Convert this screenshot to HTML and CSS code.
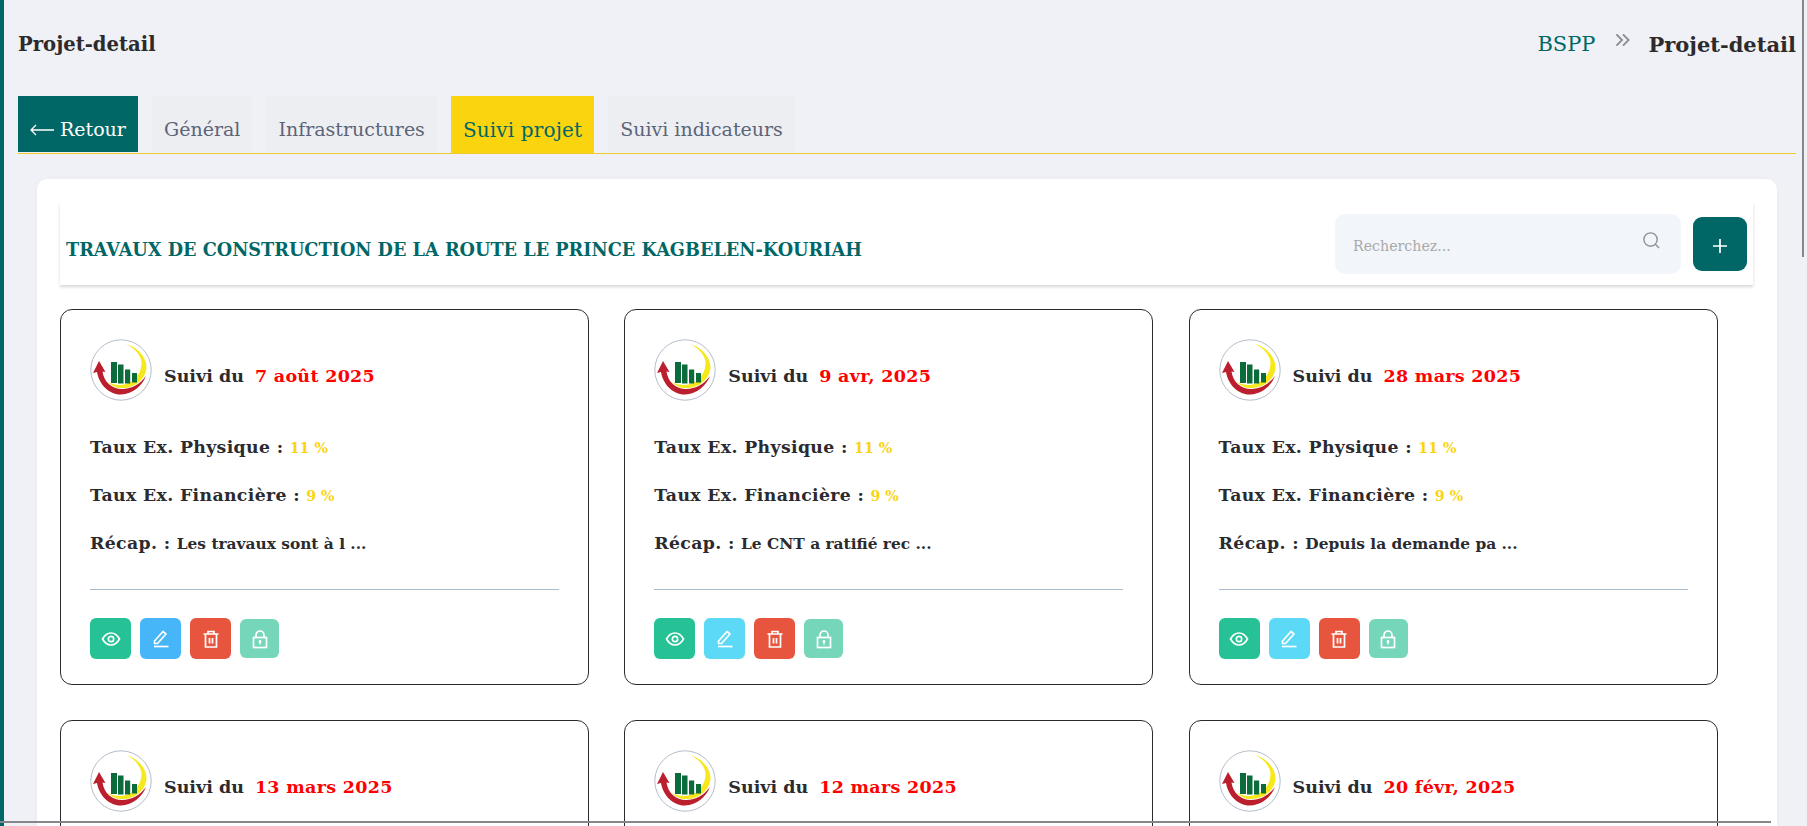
FILE: index.html
```html
<!DOCTYPE html>
<html lang="fr">
<head>
<meta charset="utf-8">
<title>Projet-detail</title>
<link rel="stylesheet" href="styles.css">
</head>
<body>
<svg class="defs" width="0" height="0" aria-hidden="true">
  <symbol id="logo" viewBox="0 0 62 62">
    <circle cx="31" cy="31" r="30.200" fill="#fff" stroke="#b4bdcb" stroke-width="1"/>
    <path d="M36 5 C48 8 57 19 56.500 29 C55.500 41 43 50 31 49 C26 49 22 47 18 43 C24 46 30 47 36 45 C46 42 51.500 33 51.500 24 C51.500 17 45 9 36 5Z" fill="#f7e81c"/>
    <rect x="21" y="23" width="6" height="21" fill="#0b6b3a"/>
    <rect x="28" y="25.500" width="5.500" height="19" fill="#0b6b3a"/>
    <rect x="35" y="30.500" width="5.200" height="14" fill="#0b6b3a"/>
    <rect x="42" y="34" width="5" height="9.500" fill="#0b6b3a"/>
    <path d="M9 22 L3 34 L7 33 C9 46 20 56 31 55.500 C43 55 52 47 56 37 C50 45 42 50 32 50 C22 50 14 43 12.500 32.500 L15.500 33Z" fill="#bb1e2d"/>
  </symbol>
  <symbol id="eye" viewBox="0 0 20 20">
    <path d="M1.500 10 C4 5.500 7 4 10 4 C13 4 16 5.500 18.500 10 C16 14.500 13 16 10 16 C7 16 4 14.500 1.500 10Z" fill="none" stroke="#fff" stroke-width="1.700"/>
    <circle cx="10" cy="10" r="2.700" fill="none" stroke="#fff" stroke-width="1.700"/>
  </symbol>
  <symbol id="pen" viewBox="0 0 20 20">
    <path d="M3.500 12 L12 2.500 L15 5 L6.500 14.500 L3.500 14.500Z" fill="none" stroke="#fff" stroke-width="1.700" stroke-linejoin="round"/>
    <path d="M3 17.500 H17.500" stroke="#fff" stroke-width="1.700"/>
  </symbol>
  <symbol id="trash" viewBox="0 0 20 20">
    <path d="M2.500 5 H17.500 M7 5 V2.500 H13 V5 M4.500 5 V18 H15.500 V5" fill="none" stroke="#fff" stroke-width="1.700"/>
    <path d="M8.500 9 V14.500 M11.500 9 V14.500" stroke="#fff" stroke-width="1.700"/>
  </symbol>
  <symbol id="lock" viewBox="0 0 20 20">
    <path d="M6 8.500 V6 C6 3.500 8 2 10 2 C12 2 14 3.500 14 6 V8.500" fill="none" stroke="#fff" stroke-width="1.700"/>
    <rect x="3.500" y="8.500" width="13" height="10" fill="none" stroke="#fff" stroke-width="1.700"/>
    <circle cx="10" cy="12.500" r="1.400" fill="#fff"/>
    <path d="M10 13 V15.500" stroke="#fff" stroke-width="1.400"/>
  </symbol>
  <symbol id="search" viewBox="0 0 20 20">
    <circle cx="9" cy="9" r="7" fill="none" stroke="#8f9399" stroke-width="1.500"/>
    <path d="M14 14 L18 18" stroke="#8f9399" stroke-width="1.500"/>
  </symbol>
  <symbol id="plus" viewBox="0 0 14 14">
    <path d="M7 0 V14 M0 7 H14" stroke="#fff" stroke-width="1.700"/>
  </symbol>
  <symbol id="chev" viewBox="0 0 16 14">
    <path d="M1.500 1 L7.500 7 L1.500 13 M8.500 1 L14.500 7 L8.500 13" fill="none" stroke="#8e8c92" stroke-width="2"/>
  </symbol>
  <symbol id="back" viewBox="0 0 24 12">
    <path d="M24 6 H1 M6 1 L1 6 L6 11" fill="none" stroke="#fff" stroke-width="1.300"/>
  </symbol>
</svg>

<div class="app">
  <header class="page-head">
    <h1 class="page-title">Projet-detail</h1>
    <nav class="crumbs">
      <a class="crumb-link">BSPP</a>
      <svg class="crumb-sep"><use href="#chev"/></svg>
      <strong class="crumb-current">Projet-detail</strong>
    </nav>
  </header>

  <div class="tabs">
    <a class="tab tab-back"><svg class="back-arrow"><use href="#back"/></svg>Retour</a>
    <a class="tab">Général</a>
    <a class="tab">Infrastructures</a>
    <a class="tab tab-active">Suivi projet</a>
    <a class="tab">Suivi indicateurs</a>
  </div>

  <main class="panel">
    <div class="panel-head">
      <h2 class="project-name">TRAVAUX DE CONSTRUCTION DE LA ROUTE LE PRINCE KAGBELEN-KOURIAH</h2>
      <div class="search">
        <span class="search-text">Recherchez...</span>
        <svg class="search-icon"><use href="#search"/></svg>
      </div>
      <button class="add-btn" type="button"><svg class="plus"><use href="#plus"/></svg></button>
    </div>

    <div class="cards">
      <article class="card">
        <div class="card-head"><svg class="logo"><use href="#logo"/></svg><span class="card-title">Suivi du</span><span class="card-date">7 août 2025</span></div>
        <p class="row">Taux Ex. Physique : <span class="val">11 %</span></p>
        <p class="row">Taux Ex. Financière : <span class="val">9 %</span></p>
        <p class="row">Récap. : <span class="recap">Les travaux sont à l ...</span></p>
        <div class="actions">
          <button class="act act-view" type="button"><svg class="ico"><use href="#eye"/></svg></button>
          <button class="act act-edit-strong" type="button"><svg class="ico"><use href="#pen"/></svg></button>
          <button class="act act-del" type="button"><svg class="ico"><use href="#trash"/></svg></button>
          <button class="act act-lock" type="button"><svg class="ico"><use href="#lock"/></svg></button>
        </div>
      </article>
      <article class="card">
        <div class="card-head"><svg class="logo"><use href="#logo"/></svg><span class="card-title">Suivi du</span><span class="card-date">9 avr, 2025</span></div>
        <p class="row">Taux Ex. Physique : <span class="val">11 %</span></p>
        <p class="row">Taux Ex. Financière : <span class="val">9 %</span></p>
        <p class="row">Récap. : <span class="recap">Le CNT a ratifié rec ...</span></p>
        <div class="actions">
          <button class="act act-view" type="button"><svg class="ico"><use href="#eye"/></svg></button>
          <button class="act act-edit" type="button"><svg class="ico"><use href="#pen"/></svg></button>
          <button class="act act-del" type="button"><svg class="ico"><use href="#trash"/></svg></button>
          <button class="act act-lock" type="button"><svg class="ico"><use href="#lock"/></svg></button>
        </div>
      </article>
      <article class="card">
        <div class="card-head"><svg class="logo"><use href="#logo"/></svg><span class="card-title">Suivi du</span><span class="card-date">28 mars 2025</span></div>
        <p class="row">Taux Ex. Physique : <span class="val">11 %</span></p>
        <p class="row">Taux Ex. Financière : <span class="val">9 %</span></p>
        <p class="row">Récap. : <span class="recap">Depuis la demande pa ...</span></p>
        <div class="actions">
          <button class="act act-view" type="button"><svg class="ico"><use href="#eye"/></svg></button>
          <button class="act act-edit" type="button"><svg class="ico"><use href="#pen"/></svg></button>
          <button class="act act-del" type="button"><svg class="ico"><use href="#trash"/></svg></button>
          <button class="act act-lock" type="button"><svg class="ico"><use href="#lock"/></svg></button>
        </div>
      </article>
      <article class="card">
        <div class="card-head"><svg class="logo"><use href="#logo"/></svg><span class="card-title">Suivi du</span><span class="card-date">13 mars 2025</span></div>
      </article>
      <article class="card">
        <div class="card-head"><svg class="logo"><use href="#logo"/></svg><span class="card-title">Suivi du</span><span class="card-date">12 mars 2025</span></div>
      </article>
      <article class="card">
        <div class="card-head"><svg class="logo"><use href="#logo"/></svg><span class="card-title">Suivi du</span><span class="card-date">20 févr, 2025</span></div>
      </article>
    </div>
  </main>
</div>

<div class="scroll-v"></div>
<div class="scroll-h"></div>
</body>
</html>
```
FILE: styles.css
```css
* { box-sizing: border-box; }
html, body { margin: 0; height: 826px; overflow: hidden; background: #eff1f6; }
body { font-family: "DejaVu Serif", serif; color: #2b2b2f; position: relative; }
.defs { position: absolute; }
.app { height: 826px; border-left: 4px solid #006766; padding: 0 0 0 14px; overflow: hidden; width: 1796px; }

.page-head { height: 96px; display: flex; justify-content: space-between; align-items: flex-start; padding-top: 31px; }
.page-title { margin: 0; font-size: 19.600px; line-height: 27px; font-weight: 700; color: #2e2a2c; }
.crumbs { display: flex; align-items: flex-start; font-size: 21px; line-height: 27px; }
.crumb-link { color: #006766; }
.crumb-sep { width: 15px; height: 14px; margin: 2px 18px 0 20px; }
.crumb-current { color: #2e2a2c; }

.tabs { display: flex; height: 58px; border-bottom: 1px solid #f0cb2e; gap: 14px; }
.tab { height: 56px; padding: 0 12px; background: #edeef2; color: #5c6478; font-size: 19px; line-height: 67px; white-space: nowrap; }
.tab-back { background: #006766; color: #fff; display: flex; align-items: flex-start; gap: 6px; width: 120px; padding: 0 0 0 12px; }
.back-arrow { width: 24px; height: 12px; margin-top: 28px; flex: none; }
.tab-active { background: #fad40f; color: #006766; height: 57px; line-height: 69px; font-size: 20px; letter-spacing: .15px; }

.panel { background: #fff; border-radius: 10px; margin: 25px 19px 0 19px; padding: 23px 24px 0 23px; box-shadow: 0 0 4px rgba(0,0,0,.03); height: 700px; }
.panel-head { height: 83px; display: flex; align-items: center; padding: 0 6px; box-shadow: 0 2px 3px rgba(0,0,0,.16); margin-bottom: 24px; }
.project-name { margin: 12px auto 0 0; font-size: 17.700px; font-weight: 700; color: #006766; }
.search { width: 346px; height: 60px; background: #f2f5f9; border-radius: 10px; display: flex; align-items: center; justify-content: space-between; padding: 0 20px 0 18px; }
.search-text { font-size: 14.200px; color: #a9a9a9; margin-top: 5px; }
.search-icon { width: 19px; height: 19px; margin-top: -6px; }
.add-btn { width: 54px; height: 54px; margin-left: 12px; background: #006766; border: 0; border-radius: 9px; padding: 0; display: flex; align-items: center; justify-content: center; }
.plus { width: 14px; height: 14px; margin-top: 4px; }

.cards { display: grid; grid-template-columns: repeat(3, 529px); column-gap: 35.300px; row-gap: 35px; }
.card { height: 376px; border: 1px solid #2b2b2f; border-radius: 12px; padding: 29px 29px 0; background: #fff; }
.card-head { display: flex; align-items: center; height: 62px; margin-bottom: 36px; }
.logo { width: 62px; height: 62px; flex: none; margin-right: 12px; }
.card-title { font-size: 17.500px; font-weight: 700; margin-top: 12px; }
.card-date { font-size: 17.500px; letter-spacing: .3px; font-weight: 700; color: #ff0000; margin: 12px 0 0 11px; }
.row { margin: 0 0 27px; font-size: 17.300px; letter-spacing: .35px; line-height: 20px; font-weight: 700; color: #2b2b2f; }
.val { color: #fad40f; font-size: 14.200px; letter-spacing: 0; }
.recap { font-size: 15.400px; letter-spacing: 0; }
.actions { border-top: 1px solid #a9bccd; display: flex; align-items: flex-start; gap: 9px; padding-top: 28px; margin-top: 35px; }
.act { width: 41px; height: 41px; border: 0; border-radius: 6px; padding: 0; display: flex; align-items: center; justify-content: center; }
.ico { width: 20px; height: 20px; }
.act-view { background: #26c296; }
.act-edit-strong { background: #47b6f8; }
.act-edit { background: #5bd9f6; }
.act-del { background: #e7553e; }
.act-lock { background: #75d6ba; width: 39px; height: 39px; margin-top: 1px; }

.scroll-v { position: absolute; left: 1802px; top: 0; width: 2px; height: 257px; background: #85878a; }
.scroll-h { position: absolute; left: 0; top: 821px; width: 1771px; height: 2px; background: #85878a; }
```
